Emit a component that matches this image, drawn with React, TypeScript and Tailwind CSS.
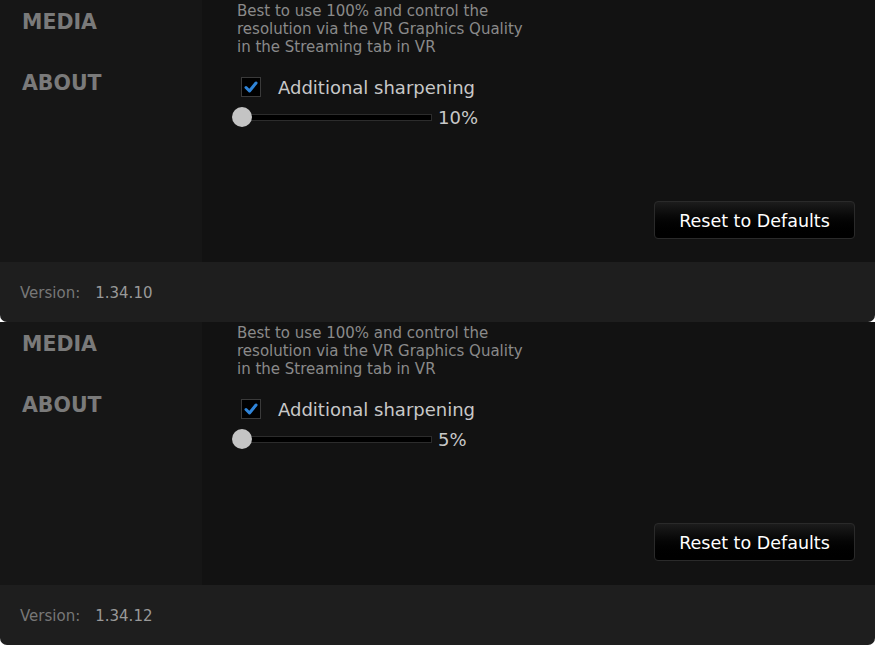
import React from 'react';

interface IPanel {
  version: string;
  sharpen: number;
  last?: boolean;
}

const font = { fontFamily: '"DejaVu Sans", Verdana, sans-serif' };

function CheckBox() {
  return (
    <div className="w-[20px] h-[20px] bg-black border border-[#3a3a3a] flex items-center justify-center">
      <svg width="14" height="12" viewBox="0 0 14 12">
        <polyline
          points="2,6.5 5.5,10 12,2"
          fill="none"
          stroke="#2f84d8"
          strokeWidth="3"
          strokeLinecap="round"
          strokeLinejoin="round"
        />
      </svg>
    </div>
  );
}

function Panel({ version, sharpen, last }: IPanel) {
  return (
    <div className={last ? 'flex flex-col h-[323px] rounded-b-[7px] overflow-hidden' : 'flex flex-col h-[322px] rounded-b-[7px] overflow-hidden'}>
      <div className={last ? 'flex h-[263px]' : 'flex h-[262px]'}>
        <div className="w-[202px] bg-[#161616] flex flex-col gap-[37px] pt-[10px] pl-[22px]">
          <div className="text-[20.5px] leading-[24px] font-bold text-[#7a7a7a]">MEDIA</div>
          <div className="text-[20.5px] leading-[24px] font-bold text-[#7a7a7a]">ABOUT</div>
        </div>
        <div className="flex-1 bg-[#121212] flex flex-col pl-[35px] pr-[20px] pt-[1px]">
          <p className="text-[15px] leading-[18px] pt-[1px] text-[#8a8a8a]">
            Best to use 100% and control the
            <br />
            resolution via the VR Graphics Quality
            <br />
            in the Streaming tab in VR
          </p>
          <div className="flex items-center mt-[21px] ml-[4px] h-[20px]">
            <CheckBox />
            <span className="ml-[17px] text-[18px] text-[#c8c8c8]">Additional sharpening</span>
          </div>
          <div className="flex items-center mt-[10px] h-[20px] -ml-[5px]">
            <div className="relative w-[200px] h-[20px] flex items-center">
              <div className="ml-[10px] w-[190px] h-[7px] bg-black border border-[#2c2c2c]" />
              <div className="absolute left-0 top-0 w-[20px] h-[20px] rounded-full bg-[#c4c4c4]" />
            </div>
            <span className="ml-[6px] pt-[1px] text-[18px] text-[#c8c8c8]">{sharpen}%</span>
          </div>
          <div className="flex justify-end mt-[74px]">
            <button className="w-[201px] h-[38px] pt-[3px] rounded-[4px] border border-[#2a2a2a] bg-gradient-to-b from-[#1c1c1c] to-black text-[17.5px] text-white">
              Reset to Defaults
            </button>
          </div>
        </div>
      </div>
      <div className="h-[60px] bg-[#1e1e1e] flex items-center pl-[20px] pt-[3px] text-[15px]">
        <span className="text-[#777777]">Version:</span>
        <span className="ml-[15px] text-[#999999]">{version}</span>
      </div>
    </div>
  );
}

export default function App() {
  return (
    <div className="w-[875px] h-[645px] bg-white overflow-hidden" style={font}>
      <Panel version="1.34.10" sharpen={10} />
      <Panel version="1.34.12" sharpen={5} last />
    </div>
  );
}
